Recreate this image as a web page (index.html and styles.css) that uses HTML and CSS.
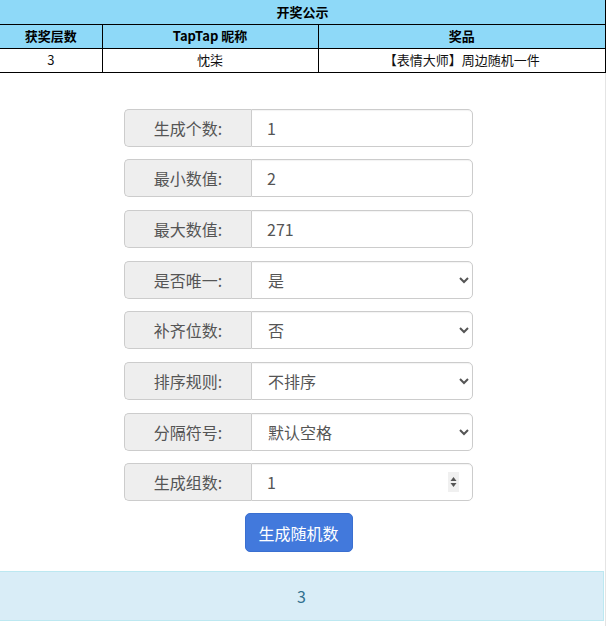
FILE: index.html
```html
<!DOCTYPE html>
<html lang="zh">
<head>
<meta charset="utf-8">
<title>随机数生成</title>
<link rel="stylesheet" href="styles.css">
</head>
<body>
<div class="page">
  <table class="prize">
    <colgroup><col class="c1"><col class="c2"><col class="c3"></colgroup>
    <tr class="head"><th colspan="3" class="title">开奖公示</th></tr>
    <tr class="head">
      <th>获奖层数</th>
      <th>TapTap 昵称</th>
      <th>奖品</th>
    </tr>
    <tr>
      <td>3</td>
      <td>忱柒</td>
      <td>【表情大师】周边随机一件</td>
    </tr>
  </table>

  <form class="form">
    <div class="group"><span class="addon">生成个数:</span><input class="ctrl" type="text" value="1"></div>
    <div class="group"><span class="addon">最小数值:</span><input class="ctrl" type="text" value="2"></div>
    <div class="group"><span class="addon">最大数值:</span><input class="ctrl" type="text" value="271"></div>
    <div class="group"><span class="addon">是否唯一:</span><select class="ctrl sel"><option>是</option><option>否</option></select></div>
    <div class="group"><span class="addon">补齐位数:</span><select class="ctrl sel"><option>否</option><option>是</option></select></div>
    <div class="group"><span class="addon">排序规则:</span><select class="ctrl sel"><option>不排序</option><option>升序</option><option>降序</option></select></div>
    <div class="group"><span class="addon">分隔符号:</span><select class="ctrl sel"><option>默认空格</option><option>逗号</option></select></div>
    <div class="group num-group"><span class="addon">生成组数:</span><input class="ctrl num" type="number" value="1">
      <span class="spin" aria-hidden="true"><svg width="9" height="20" viewBox="0 0 9 20"><path d="M4.5 5 L7.5 9 L1.5 9 Z" fill="#555"/><path d="M4.5 15 L7.5 11 L1.5 11 Z" fill="#555"/></svg></span>
    </div>
    <button type="button" class="btn">生成随机数</button>
  </form>

  <div class="result">3</div>
</div>
</body>
</html>
```

FILE: styles.css
```css
html, body {
  margin: 0;
  padding: 0;
  background: #fff;
}
body {
  font-family: "Noto Sans CJK SC", "Noto Sans", "Liberation Sans", sans-serif;
  color: #000;
}
.page {
  width: 606px;
  border-right: 1px solid #e4e4e4;
  min-height: 626px;
  box-sizing: border-box;
}
.prize {
  width: 606px;
  border-collapse: collapse;
  font-size: 13px;
  table-layout: fixed;
}
.prize tr { height: 24px; }
.prize th, .prize td {
  border: 1px solid #000;
  text-align: center;
  padding: 0;
  line-height: 20px;
}
.prize tr > :first-child { border-left: none; }
.prize .head th {
  background: #8ed9f8;
  font-weight: bold;
}
.prize .title { border-top: none; }
.prize td { font-weight: normal; color: #111; }
.c1 { width: 102px; }
.c2 { width: 216px; }

.form {
  width: 349px;
  margin: 36px 0 0 124px;
  display: flex;
  flex-direction: column;
  gap: 12.7px;
}
.group {
  display: flex;
  height: 38px;
  font-size: 16px;
  position: relative;
}
.addon {
  width: 127px;
  box-sizing: border-box;
  background: #eee;
  border: 1px solid #ccc;
  border-right: none;
  border-radius: 5px 0 0 5px;
  color: #555;
  display: flex;
  align-items: center;
  justify-content: center;
}
.ctrl {
  flex: 1;
  min-width: 0;
  box-sizing: border-box;
  height: 38px;
  border: 1px solid #ccc;
  border-radius: 0 5px 5px 0;
  background: #fff;
  color: #555;
  font-family: inherit;
  font-size: 16px;
  padding: 0 12px 0 15px;
  margin: 0;
  box-shadow: inset 0 1px 1px rgba(0,0,0,0.05);
  outline: none;
}
.sel {
  padding-left: 12px;
}
.num { -moz-appearance: textfield; }
.num::-webkit-inner-spin-button,
.num::-webkit-outer-spin-button { -webkit-appearance: none; margin: 0; }
.spin {
  position: absolute;
  right: 14px;
  top: 9px;
  width: 11px;
  height: 20px;
  background: #f0f0f0;
  display: flex;
  justify-content: center;
}
.btn {
  align-self: center;
  margin-top: -1px;
  width: 108px;
  height: 39px;
  background: #4279dc;
  color: #fff;
  border: 1px solid #3a6fd0;
  border-radius: 5px;
  font-family: inherit;
  font-size: 16px;
  cursor: pointer;
}
.result {
  margin-top: 19px;
  width: 604px;
  height: 50px;
  box-sizing: border-box;
  background: #d9edf7;
  border: 1px solid #bce8f1;
  border-left: none;
  color: #31708f;
  font-size: 16px;
  display: flex;
  align-items: center;
  justify-content: center;
}
```
